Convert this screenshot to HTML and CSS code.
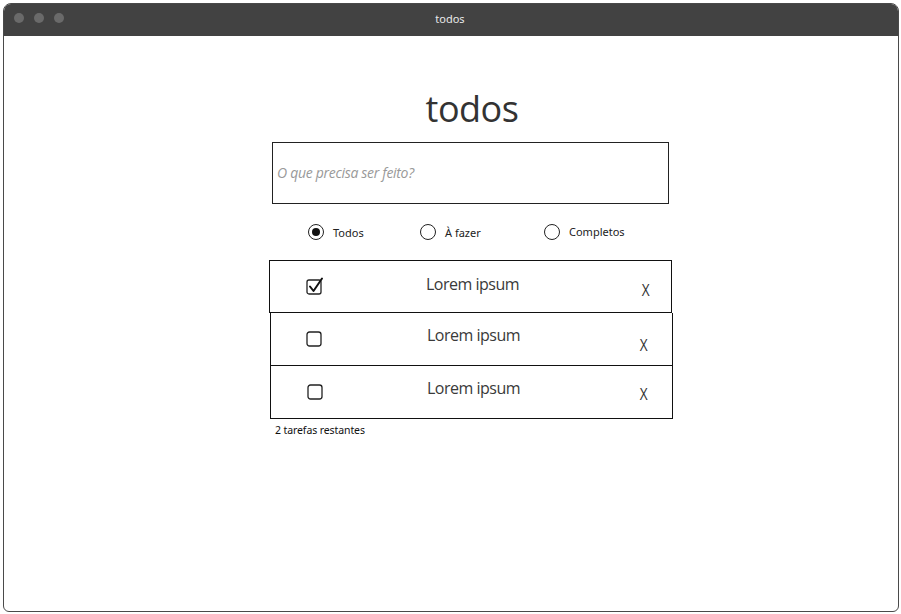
FILE: index.html
```html
<!DOCTYPE html>
<html>
<head>
<meta charset="utf-8">
<link rel="stylesheet" href="styles.css">
</head>
<body>
<div class="window">
  <div class="titlebar">
    <div class="dots"><span class="dot"></span><span class="dot"></span><span class="dot"></span></div>
    <div class="wtitle">todos</div>
  </div>
  <div class="content">
    <div class="col">
      <h1 class="title">todos</h1>
      <div class="input"><span class="ph">O que precisa ser feito?</span></div>
      <div class="filters">
        <div class="radio r1"><span class="circ on"></span><span>Todos</span></div>
        <div class="radio r2"><span class="circ"></span><span>À fazer</span></div>
        <div class="radio r3"><span class="circ"></span><span>Completos</span></div>
      </div>
      <div class="list">
        <div class="row row1">
          <svg class="cb" width="20" height="18" viewBox="0 0 20 18"><rect x="1" y="3" width="14" height="14" rx="2" fill="none" stroke="#222" stroke-width="1.3"/><path d="M4 9.5 L7.5 14 L16 1.5" fill="none" stroke="#111" stroke-width="2" stroke-linecap="round" stroke-linejoin="round"/></svg>
          <span class="txt">Lorem ipsum</span>
          <span class="x">X</span>
        </div>
        <div class="row row2">
          <svg class="cb" width="20" height="18" viewBox="0 0 20 18"><rect x="1" y="2" width="14" height="14" rx="2.5" fill="none" stroke="#222" stroke-width="1.3"/></svg>
          <span class="txt">Lorem ipsum</span>
          <span class="x">X</span>
        </div>
        <div class="row row3">
          <svg class="cb" width="20" height="18" viewBox="0 0 20 18"><rect x="1" y="2" width="14" height="14" rx="2.5" fill="none" stroke="#222" stroke-width="1.3"/></svg>
          <span class="txt">Lorem ipsum</span>
          <span class="x">X</span>
        </div>
      </div>
      <div class="footer">2 tarefas restantes</div>
    </div>
  </div>
</div>
</body>
</html>
```
FILE: styles.css
```css
html, body { margin: 0; padding: 0; background: #fff; }
body { width: 901px; height: 614px; overflow: hidden; }
.window {
  margin: 3px 0 0 3px;
  width: 894px;
  height: 607px;
  border: 1px solid #4a4a4a;
  border-radius: 8px 8px 6px 6px;
  overflow: hidden;
  background: #fff;
}
.titlebar {
  height: 32px;
  background: #424242;
  display: flex;
  align-items: center;
  position: relative;
}
.dots { display: flex; gap: 10px; padding-left: 10px; margin-top: -4px; }
.dot { width: 10px; height: 10px; border-radius: 50%; background: #6a6a6a; }
.wtitle {
  position: absolute; left: 0; right: 0; top: 0; bottom: 4px;
  display: flex; align-items: center; justify-content: center;
  color: #e8e8e8; font-family: "Noto Sans", sans-serif; font-size: 11px;
  padding-right: 2px;
}
.content { padding-left: 265px; }
.col { width: 403px; display: flex; flex-direction: column; }
.title {
  margin: 48px 0 0 0;
  font-family: "Open Sans", sans-serif;
  font-weight: 400;
  font-size: 36px;
  line-height: 50px;
  color: #333;
  text-align: center;
  letter-spacing: -0.5px;
  padding-left: 3px;
}
.input {
  margin: 8px 0 0 3px;
  width: 395px;
  height: 60px;
  border: 1px solid #222;
  display: flex; align-items: center;
  box-sizing: content-box;
}
.ph {
  font-family: "Open Sans", sans-serif;
  font-style: italic;
  font-size: 14px;
  color: #999;
  padding-left: 4px;
  padding-bottom: 2px;
  letter-spacing: -0.3px;
}
.filters {
  display: flex;
  margin-top: 19px;
  height: 18px;
  align-items: center;
  font-family: "Noto Sans", sans-serif;
  font-size: 11px;
  color: #222;
}
.radio { display: flex; align-items: center; gap: 9px; }
.r1 { margin-left: 39px; width: 112px; }
.r2 { width: 124px; }
.circ {
  width: 16px; height: 16px; border: 1px solid #222; border-radius: 50%;
  box-sizing: border-box; display: flex; align-items: center; justify-content: center;
  background: #fff;
}
.circ.on::after { content: ""; width: 8px; height: 8px; border-radius: 50%; background: #111; }
.r3 .circ { margin-top: -1px; }
.r3 span:last-child { margin-top: -2px; }
.list { margin-top: 19px; display: flex; flex-direction: column; }
.row {
  height: 52px;
  border: 1px solid #111;
  box-sizing: border-box;
  width: 403px;
  display: flex;
  align-items: flex-start;
  position: relative;
}
.row1 { height: 53px; width: 403px; margin-left: 0; }
.row2 { margin-left: 1px; width: 403px; border-top: none; height: 53px; }
.row3 { margin-left: 1px; width: 403px; border-top: 1px solid #111; margin-top: -1px; height: 54px; }
.cb { position: absolute; left: 36px; top: 16px; }
.row2 .cb { left: 35px; top: 17px; }
.row3 .cb { left: 36px; top: 17px; }
.txt {
  position: absolute; left: 156px; top: 12px;
  font-family: "Open Sans", sans-serif;
  font-size: 16px; color: #3a3a3a;
  letter-spacing: -0.5px;
}
.row2 .txt, .row3 .txt { top: 11px; }
.x {
  position: absolute; left: 371px; top: 18px;
  font-family: "Open Sans", sans-serif; font-size: 16px; color: #333;
  transform: scaleX(0.85);
}
.row2 .x { left: 368px; top: 21px; }
.row3 .x { left: 368px; top: 17px; }
.footer {
  margin: 4px 0 0 6px;
  font-family: "Noto Sans", sans-serif;
  font-size: 10.5px;
  color: #111;
  letter-spacing: -0.1px;
}
```
